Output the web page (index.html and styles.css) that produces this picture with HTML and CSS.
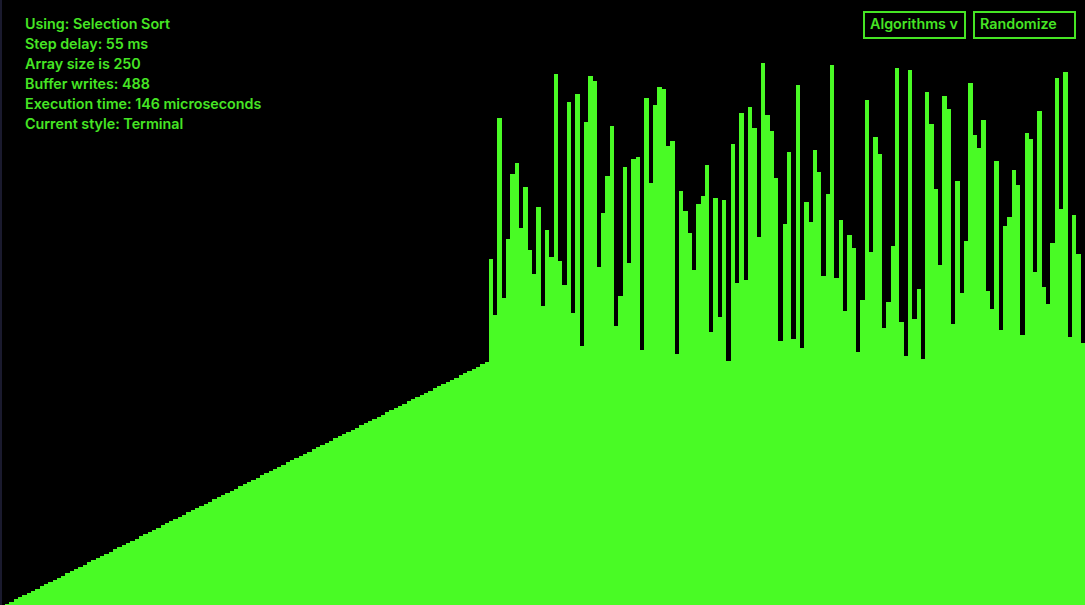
FILE: index.html
```html
<!DOCTYPE html>
<html lang="en">
<head>
  <meta charset="UTF-8">
  <title>Sorting Visualizer</title>
  <link rel="stylesheet" href="styles.css">
</head>
<body>
  <div class="stage">
    <div id="bars" class="bars"></div>

    <div class="info">
      <div>Using: Selection Sort</div>
      <div>Step delay: 55 ms</div>
      <div>Array size is 250</div>
      <div>Buffer writes: 488</div>
      <div>Execution time: 146 microseconds</div>
      <div>Current style: Terminal</div>
    </div>

    <div class="controls">
      <button type="button" class="btn">Algorithms v</button>
      <button type="button" class="btn">Randomize</button>
    </div>
  </div>

  <script src="app.js"></script>
</body>
</html>
```

FILE: styles.css
```css
html, body {
  margin: 0;
  height: 100%;
  background-color: #000;
  overflow: hidden;
}

.stage {
  position: relative;
  height: 605px;
  font-family: Inter, sans-serif;
  font-size: 14.3px;
  font-weight: 600;
  color: #46e524;
}

.bars {
  display: flex;
  align-items: flex-end;
  height: 605px;
  padding-left: 3px;
  border-left: 2px solid #1a1a2e;
  overflow: hidden;
  box-sizing: border-box;
}

.bar {
  flex: none;
  background-color: #49fb25;
}

.info {
  position: absolute;
  top: 14px;
  left: 25px;
  line-height: 20px;
}

.controls {
  position: absolute;
  top: 11px;
  right: 9px;
  display: flex;
  gap: 7px;
}

.btn {
  width: 103px;
  height: 28px;
  padding: 0 0 3px 5px;
  background-color: #000;
  border: 2px solid #46e524;
  color: #46e524;
  font: inherit;
  text-align: left;
}
```

FILE: app.js
```js
// tops of the unsorted part, in px from the top of the window
const tops = [
  259, 315, 118, 298, 239, 174, 163, 228, 187, 250, 274, 207, 306, 230, 257, 74, 261, 285, 102, 313,
  94, 346, 122, 76, 81, 267, 213, 176, 126, 326, 296, 167, 263, 159, 157, 350, 98, 183, 105, 87,
  89, 146, 141, 354, 191, 211, 233, 270, 204, 196, 165, 332, 198, 317, 200, 361, 144, 283, 113, 280,
  107, 128, 237, 63, 115, 131, 178, 341, 224, 152, 339, 85, 348, 202, 222, 150, 172, 276, 194, 65,
  278, 220, 311, 235, 248, 352, 300, 100, 252, 137, 154, 328, 302, 246, 68, 322, 356, 70, 319, 289,
  359, 92, 124, 189, 265, 96, 109, 324, 181, 293, 241, 83, 135, 148, 120, 291, 309, 161, 330, 226,
  217, 170, 185, 335, 133, 139, 272, 111, 287, 304, 243, 78, 209, 72, 337, 215, 254, 343
];

const bars = document.getElementById('bars');
const sortedCount = 112;
const pitch = 4.32;
const offset = 5.5;

function addBar(index, height) {
  const left = Math.floor(offset + pitch * index);
  const right = Math.floor(offset + pitch * (index + 1));
  const bar = document.createElement('div');
  bar.className = 'bar';
  bar.style.width = (right - left) + 'px';
  bar.style.height = height + 'px';
  bars.appendChild(bar);
}

for (let i = 0; i < sortedCount; i++) {
  addBar(i, Math.round(2.176 * (i + 1) - 1.01));
}

tops.forEach((top, i) => addBar(sortedCount + i, 605 - top));
```
